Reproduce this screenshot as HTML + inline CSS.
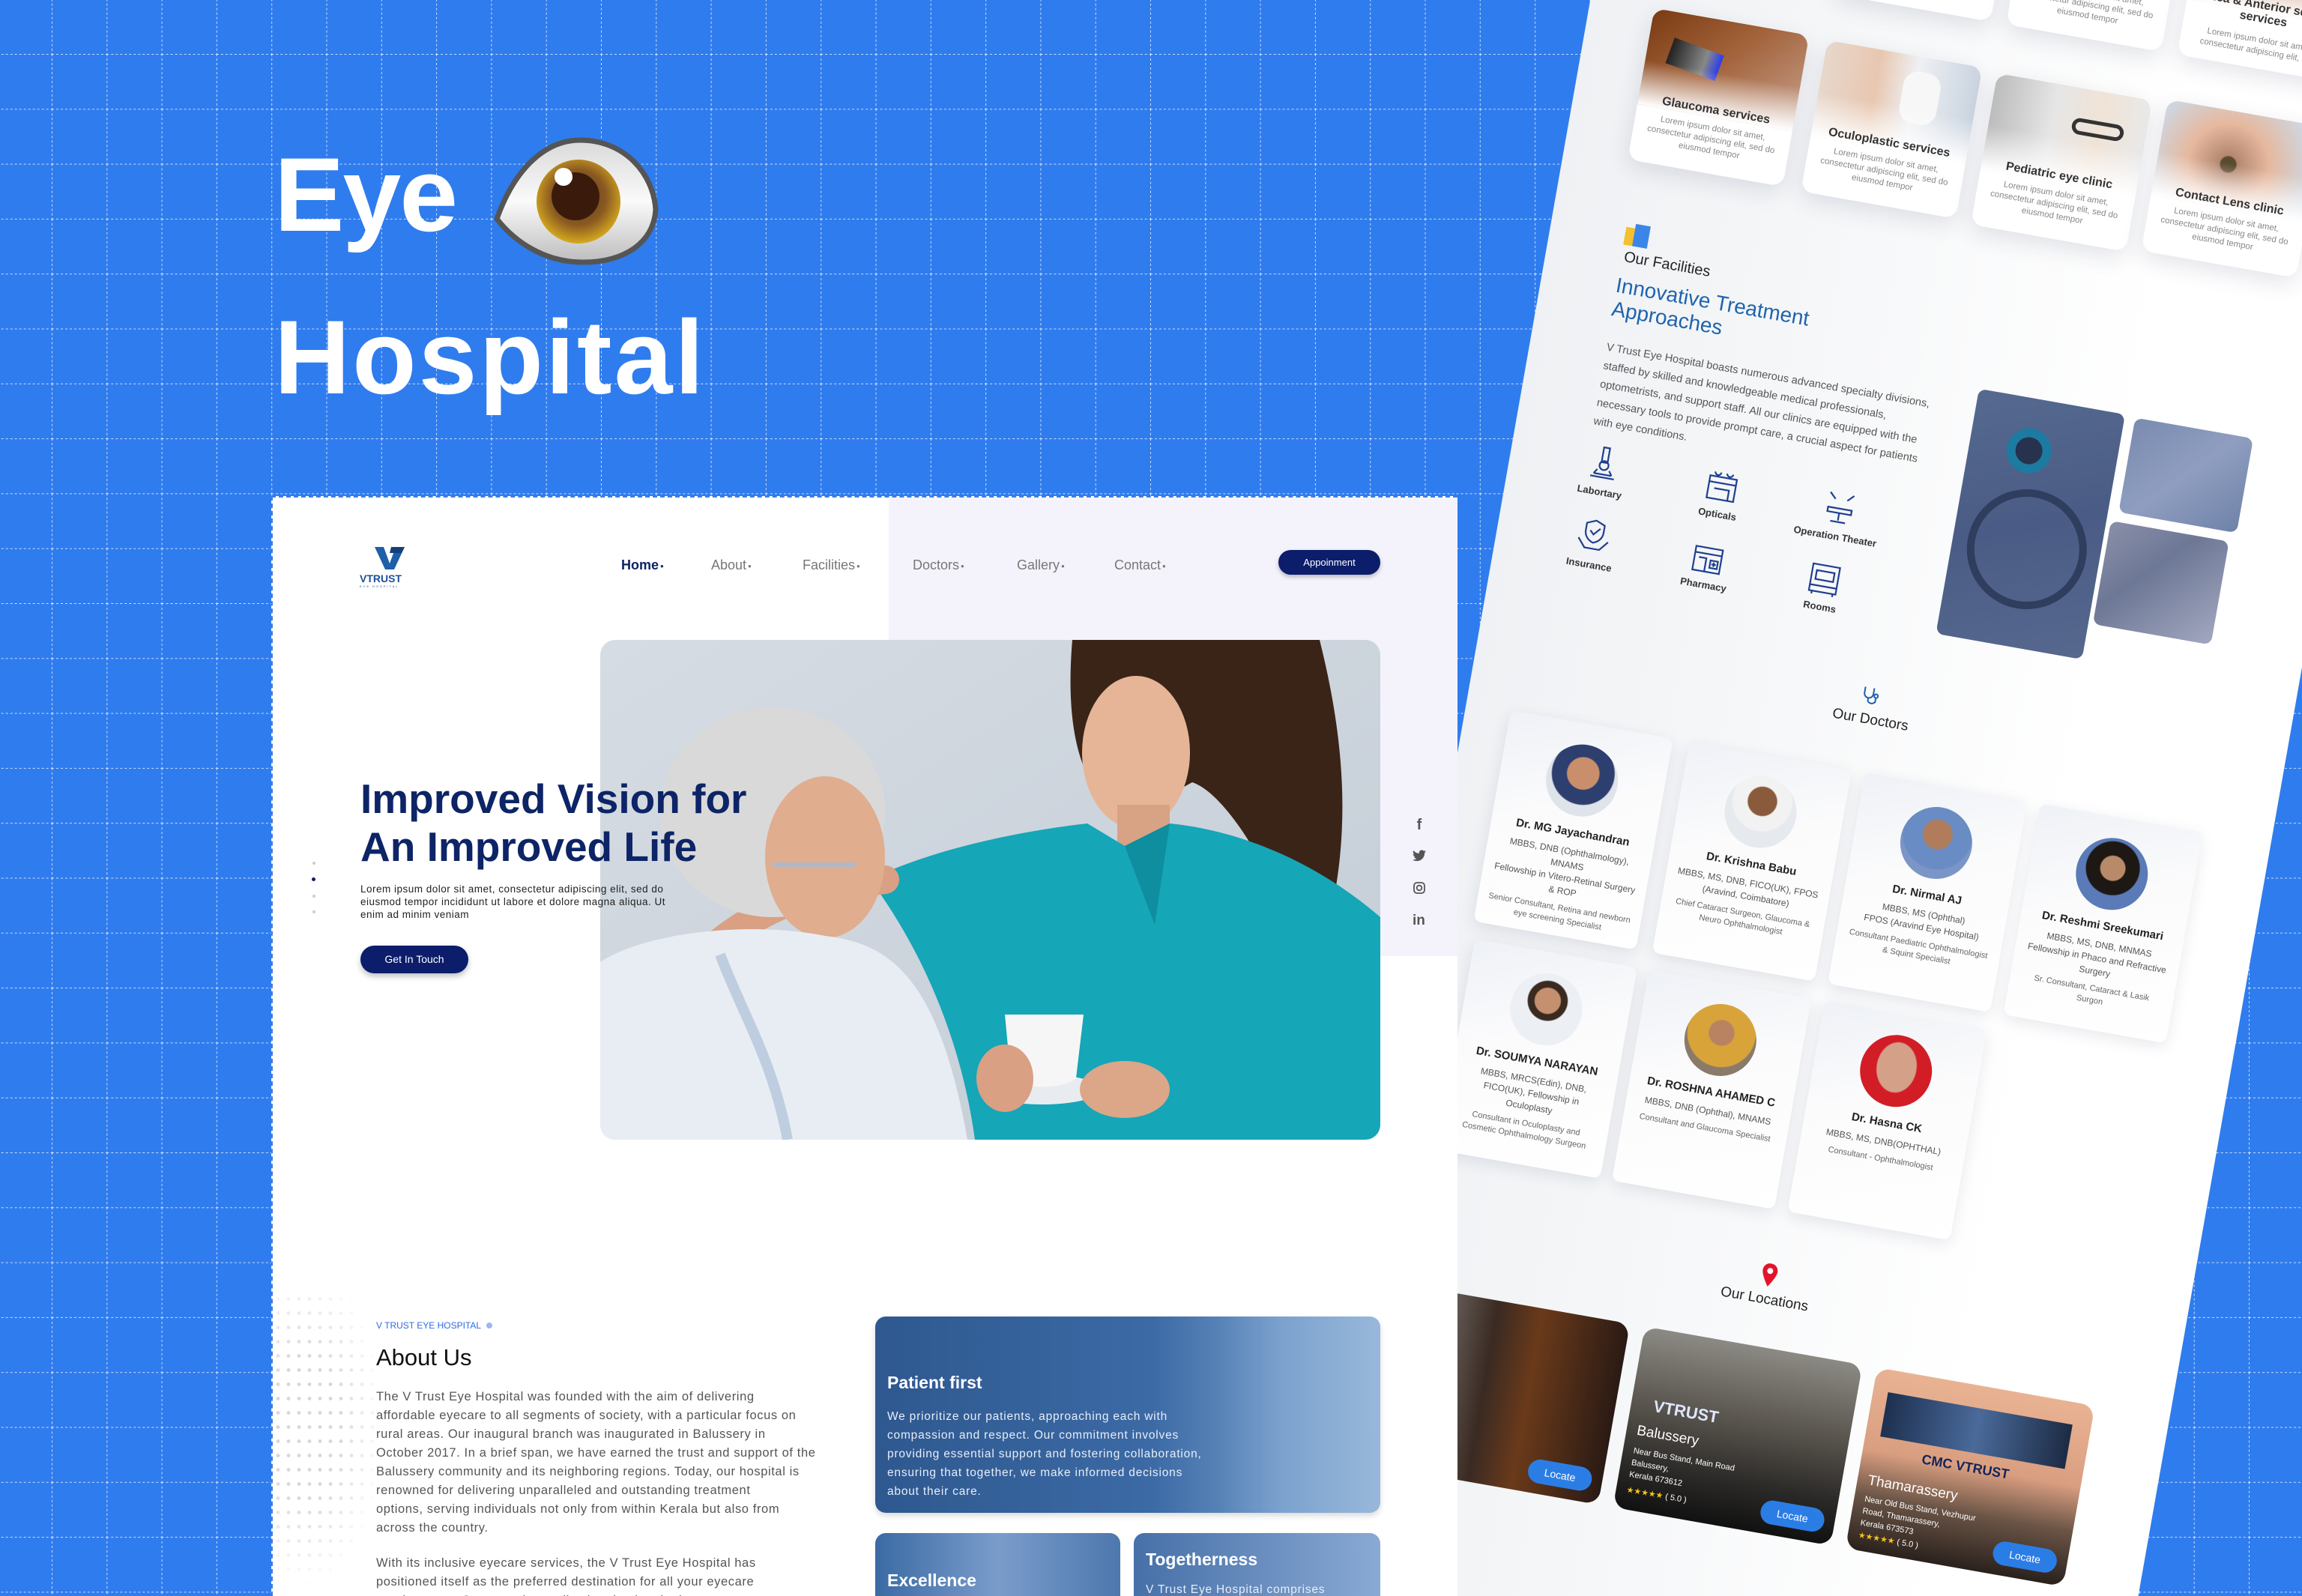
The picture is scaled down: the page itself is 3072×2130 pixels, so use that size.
<!DOCTYPE html>
<html><head><meta charset="utf-8"><style>
*{margin:0;padding:0;box-sizing:border-box}
html,body{width:3072px;height:2130px;overflow:hidden}
body{background:#2f7cee;font-family:"Liberation Sans",sans-serif}
#wrap{position:relative;width:3072px;height:2130px;overflow:hidden;background:#2f7cee}
.abs{position:absolute}
#grid{position:absolute;left:0;top:0}
.title{position:absolute;left:366px;color:#fff;font-weight:bold;font-size:140px;line-height:1;letter-spacing:-2px}
.rp{position:absolute;left:2228px;top:-600px;width:1090px;height:3400px;transform-origin:0 0;transform:rotate(10deg);background:linear-gradient(90deg,#eff1f4 0%,#f8f9fa 45%,#fff 75%);overflow:hidden}
.rp .a{position:absolute}
.sc{position:absolute;width:210px;height:205px;background:#fff;border-radius:16px;box-shadow:0 10px 30px rgba(30,40,80,.12);overflow:hidden;text-align:center}
.sc .im{position:absolute;left:0;top:0;width:100%;height:130px}
.sc .im:after{content:"";position:absolute;left:0;right:0;bottom:0;height:60px;background:linear-gradient(rgba(255,255,255,0),#fff)}
.sc h4{position:absolute;left:0;right:0;top:112px;font-size:16px;color:#333;font-weight:600}
.sc p{position:absolute;left:12px;right:12px;top:138px;font-size:11.5px;color:#888;line-height:15px}
.fi{position:absolute;width:120px;text-align:center;font-size:13px;font-weight:bold;color:#333}
.fi svg{display:block;margin:0 auto 6px}
.dc{position:absolute;width:220px;height:286px;background:linear-gradient(160deg,#eef1f6,#fbfbfc 40%,#fff);border-radius:10px;box-shadow:0 6px 20px rgba(30,40,80,.1);text-align:center;overflow:hidden}
.dc .ph{width:96px;height:96px;border-radius:50%;margin:28px auto 14px;overflow:hidden;position:relative}
.dc h5{font-size:15px;color:#222;margin-bottom:8px}
.dc p{font-size:12px;color:#555;line-height:18px;padding:0 14px}
.dc small{display:block;font-size:11px;color:#666;line-height:16px;padding:0 14px;margin-top:6px}
.lc{position:absolute;width:295px;height:245px;border-radius:18px;overflow:hidden;color:#fff}
.lc .lb{position:absolute;right:14px;bottom:14px;background:#2b7de6;border-radius:16px;width:86px;height:32px;text-align:center;line-height:32px;font-size:14px}
.pg{position:absolute;left:362px;top:662px;width:1583px;height:1468px;background:#fff;border-left:2px dashed #3a7ee6;border-top:2px dashed #3a7ee6;overflow:hidden}
.pg .a{position:absolute}
.nav{font-size:18px;color:#777;top:80px}
.nav b{font-size:8px;vertical-align:middle;margin-left:2px}
.ab p{font-size:16.5px;color:#555;line-height:25px;white-space:nowrap;letter-spacing:0.6px}
.card{border-radius:14px;overflow:hidden;color:#fff}
</style></head><body><div id="wrap">
<svg id="grid" width="3072" height="2130">
<defs><pattern id="g" x="69" y="72" width="73.3" height="73.3" patternUnits="userSpaceOnUse">
<line x1="0" y1="0" x2="0" y2="73.3" stroke="rgba(255,255,255,.75)" stroke-width="2" stroke-dasharray="3 3"/>
<line x1="0" y1="0" x2="73.3" y2="0" stroke="rgba(255,255,255,.75)" stroke-width="2" stroke-dasharray="3 3"/>
</pattern>
<radialGradient id="iris" cx="50%" cy="45%" r="55%"><stop offset="0" stop-color="#5a3514"/><stop offset=".6" stop-color="#8a5a22"/><stop offset="1" stop-color="#d7a91e"/></radialGradient>
<linearGradient id="wh" x1="0" y1="0" x2="0" y2="1"><stop offset="0" stop-color="#d9d9d9"/><stop offset=".5" stop-color="#fafafa"/><stop offset="1" stop-color="#bdbdbd"/></linearGradient>
</defs>
<rect width="3072" height="2130" fill="url(#g)"/>
<path d="M663,292 C688,222 730,187 774,187 C834,187 872,232 875,280 C872,325 832,350 778,350 C728,350 688,324 663,292 Z" fill="url(#wh)" stroke="#555" stroke-width="7"/>
<circle cx="772" cy="269" r="56" fill="url(#iris)"/>
<circle cx="768" cy="262" r="32" fill="#3a1b0b"/>
<circle cx="752" cy="236" r="12" fill="#fff"/>
</svg>
<div class="title" style="top:190px">Eye</div>
<div class="title" style="top:407px;letter-spacing:3px">Hospital</div>

<div class="rp">
 <div class="sc" style="left:321px;top:340px"><h4>Cataract services</h4><p>Lorem ipsum dolor sit amet, consectetur adipiscing elit, sed do eiusmod tempor</p></div>
 <div class="sc" style="left:552px;top:340px"><h4>Retina services</h4><p>Lorem ipsum dolor sit amet, consectetur adipiscing elit, sed do eiusmod tempor</p></div>
 <div class="sc" style="left:784px;top:340px"><div class="im" style="background:linear-gradient(#a8755a,#d8b39a)"></div><h4>Cornea &amp; Anterior segment services</h4><p style="top:160px">Lorem ipsum dolor sit amet, consectetur adipiscing elit, sed</p></div>
 <div class="sc" style="left:86px;top:605px"><div class="im" style="background:linear-gradient(135deg,#7a3a12,#a2623a 45%,#c7a08c)"><div class="a" style="left:30px;top:40px;width:70px;height:36px;background:linear-gradient(90deg,#222,#888 70%,#2a3cf0);transform:rotate(10deg)"></div></div><h4>Glaucoma services</h4><p>Lorem ipsum dolor sit amet, consectetur adipiscing elit, sed do eiusmod tempor</p></div>
 <div class="sc" style="left:321px;top:607px"><div class="im" style="background:linear-gradient(90deg,#e7d7cc,#e8c7b0 35%,#eef0f3 60%,#c9d3df)"><div class="a" style="left:110px;top:20px;width:50px;height:70px;border-radius:20px;background:#f7f7f7"></div></div><h4>Oculoplastic services</h4><p>Lorem ipsum dolor sit amet, consectetur adipiscing elit, sed do eiusmod tempor</p></div>
 <div class="sc" style="left:552px;top:611px"><div class="im" style="background:linear-gradient(90deg,#bcbcbc,#e6e6e6 40%,#f0e3d6 70%,#e9e9e9)"><div class="a" style="left:110px;top:40px;width:70px;height:22px;border:5px solid #333;border-radius:12px"></div></div><h4>Pediatric eye clinic</h4><p>Lorem ipsum dolor sit amet, consectetur adipiscing elit, sed do eiusmod tempor</p></div>
 <div class="sc" style="left:782px;top:606px"><div class="im" style="background:radial-gradient(circle at 45% 55%,#5a4a30 0 10px,#b48870 12px,#e6b89e 40%,#cfd6df 80%)"></div><h4>Contact Lens clinic</h4><p>Lorem ipsum dolor sit amet, consectetur adipiscing elit, sed do eiusmod tempor</p></div>

 <div class="a" style="left:100px;top:893px;width:34px;height:32px"><div class="a" style="left:0;top:6px;width:14px;height:24px;background:#f2c12e"></div><div class="a" style="left:12px;top:0;width:20px;height:30px;background:#3a86e8"></div></div>
 <div class="a" style="left:104px;top:928px;font-size:20px;color:#222">Our Facilities</div>
 <div class="a" style="left:100px;top:962px;font-size:28px;color:#1f64ad;line-height:32px;width:420px">Innovative Treatment<br>Approaches</div>
 <div class="a" style="left:102px;top:1050px;width:455px;font-size:14.5px;color:#555;line-height:25px">V Trust Eye Hospital boasts numerous advanced specialty divisions, staffed by skilled and knowledgeable medical professionals, optometrists, and support staff. All our clinics are equipped with the necessary tools to provide prompt care, a crucial aspect for patients with eye conditions.</div>
 <div class="fi" style="left:66px;top:1190px"><svg width="44" height="50" viewBox="0 0 44 50" fill="none" stroke="#1f3f8f" stroke-width="2.2"><rect x="18" y="4" width="8" height="20"/><circle cx="22" cy="28" r="6"/><path d="M6 44h32M10 40h24M14 34l-4 6M30 34l4 6"/></svg>Labortary</div>
 <div class="fi" style="left:226px;top:1192px"><svg width="48" height="50" viewBox="0 0 48 50" fill="none" stroke="#1f3f8f" stroke-width="2.2"><rect x="6" y="14" width="36" height="30"/><path d="M6 22h36M14 30h20v14M12 8a4 4 0 1 0 8 0M28 8a4 4 0 1 0 8 0"/></svg>Opticals</div>
 <div class="fi" style="left:386px;top:1194px"><svg width="48" height="50" viewBox="0 0 48 50" fill="none" stroke="#1f3f8f" stroke-width="2.2"><path d="M8 26h32v6H8zM24 32v10M14 44h20M8 6l8 8M40 6l-8 8"/></svg>Operation Theater</div>
 <div class="fi" style="left:69px;top:1288px"><svg width="48" height="50" viewBox="0 0 48 50" fill="none" stroke="#1f3f8f" stroke-width="2.2"><path d="M24 4l12 5v10c0 8-6 13-12 15-6-2-12-7-12-15V9z"/><path d="M18 18l5 5 8-9M4 30l10 12h10M44 30l-10 12h-10"/></svg>Insurance</div>
 <div class="fi" style="left:224px;top:1288px"><svg width="48" height="50" viewBox="0 0 48 50" fill="none" stroke="#1f3f8f" stroke-width="2.2"><rect x="6" y="14" width="36" height="32"/><path d="M6 22h36M12 28h10v18M28 30h10v10H28zM33 32v6M30 35h6"/></svg>Pharmacy</div>
 <div class="fi" style="left:382px;top:1290px"><svg width="48" height="50" viewBox="0 0 48 50" fill="none" stroke="#1f3f8f" stroke-width="2.2"><rect x="6" y="8" width="36" height="36"/><path d="M12 16h24v12H12zM6 36h36M10 44v4M38 44v4"/></svg>Rooms</div>
 <div class="a" style="left:601px;top:1030px;width:198px;height:332px;border-radius:10px;background:linear-gradient(160deg,#56698f,#4a5c85 50%,#56688e);overflow:hidden"><div class="a" style="left:50px;top:40px;width:60px;height:60px;border-radius:50%;border:12px solid #1d7aa0;background:#26324e"></div><div class="a" style="left:20px;top:120px;width:160px;height:160px;border-radius:50%;border:10px solid #2f3d5e"></div></div>
 <div class="a" style="left:813px;top:1032px;width:160px;height:128px;border-radius:10px;background:linear-gradient(135deg,#7a8bb0,#8f9ec0 50%,#6f82a8)"></div>
 <div class="a" style="left:805px;top:1173px;width:160px;height:140px;border-radius:10px;background:linear-gradient(135deg,#8a8fa8,#6d7896 40%,#a2a7bf)"></div>

 <svg class="a" style="left:515px;top:1446px" width="26" height="28" viewBox="0 0 26 28" fill="none" stroke="#1f5fb0" stroke-width="2"><path d="M6 2v8a6 6 0 0 0 12 0V2M12 16v4a6 6 0 0 0 10 0v-6"/><circle cx="22" cy="12" r="2.5"/></svg>
 <div class="a" style="left:470px;top:1480px;width:130px;text-align:center;font-size:19px;color:#222">Our Doctors</div>
 <div class="dc" style="left:60px;top:1561px"><div class="ph" style="background:radial-gradient(circle at 50% 40%,#c98f6d 0 28%,#2d3f6e 30% 55%,#dfe3ea 57%)"></div><h5>Dr. MG Jayachandran</h5><p>MBBS, DNB (Ophthalmology), MNAMS<br>Fellowship in Vitero-Retinal Surgery &amp; ROP</p><small>Senior Consultant, Retina and newborn eye screening Specialist</small></div>
 <div class="dc" style="left:302px;top:1561px"><div class="ph" style="background:radial-gradient(circle at 50% 35%,#8a5a3c 0 24%,#f2f2f2 26% 50%,#e6e9ee 52%)"></div><h5>Dr. Krishna Babu</h5><p>MBBS, MS, DNB, FICO(UK), FPOS (Aravind, Coimbatore)</p><small>Chief Cataract Surgeon, Glaucoma &amp; Neuro Ophthalmologist</small></div>
 <div class="dc" style="left:540px;top:1561px"><div class="ph" style="background:radial-gradient(circle at 50% 38%,#b07c5c 0 25%,#6a8cc4 27% 60%,#7b96c6 62%)"></div><h5>Dr. Nirmal AJ</h5><p>MBBS, MS (Ophthal)<br>FPOS (Aravind Eye Hospital)</p><small>Consultant Paediatric Ophthalmologist &amp; Squint Specialist</small></div>
 <div class="dc" style="left:778px;top:1561px"><div class="ph" style="background:radial-gradient(circle at 50% 42%,#b98a6a 0 22%,#1d1814 24% 48%,#5a7bb8 50%)"></div><h5>Dr. Reshmi Sreekumari</h5><p>MBBS, MS, DNB, MNMAS<br>Fellowship in Phaco and Refractive Surgery</p><small>Sr. Consultant, Cataract &amp; Lasik Surgon</small></div>
 <div class="dc" style="left:66px;top:1870px"><div class="ph" style="background:radial-gradient(circle at 50% 38%,#c49070 0 22%,#3a2a20 24% 34%,#eceff3 36%)"></div><h5>Dr. SOUMYA NARAYAN</h5><p>MBBS, MRCS(Edin), DNB, FICO(UK), Fellowship in Oculoplasty</p><small>Consultant in Oculoplasty and Cosmetic Ophthalmology Surgeon</small></div>
 <div class="dc" style="left:302px;top:1870px"><div class="ph" style="background:radial-gradient(circle at 50% 40%,#b98361 0 22%,#d8a43a 24% 60%,#8a7a6a 62%)"></div><h5>Dr. ROSHNA AHAMED C</h5><p>MBBS, DNB (Ophthal), MNAMS</p><small>Consultant and Glaucoma Specialist</small></div>
 <div class="dc" style="left:540px;top:1870px"><div class="ph" style="background:radial-gradient(ellipse 30% 38% at 50% 45%,#d4a088 0 90%,#d21d26 95%);background-color:#fff"></div><h5>Dr. Hasna CK</h5><p>MBBS, MS, DNB(OPHTHAL)</p><small>Consultant - Ophthalmologist</small></div>

 <svg class="a" style="left:520px;top:2228px" width="22" height="32" viewBox="0 0 22 32"><path d="M11 0C5 0 1 4.5 1 10c0 7 10 21 10 21s10-14 10-21C21 4.5 17 0 11 0z" fill="#e3142b"/><circle cx="11" cy="10" r="4" fill="#fff"/></svg>
 <div class="a" style="left:455px;top:2266px;width:150px;text-align:center;font-size:19px;color:#222">Our Locations</div>
 <div class="lc" style="left:64px;top:2340px;background:linear-gradient(90deg,#8c8a8a,#3a2a22 40%,#6a3a1a 60%,#2a1a14);"><div class="lb">Locate</div></div>
 <div class="lc" style="left:379px;top:2340px;background:linear-gradient(180deg,#8c8a84,#5b5750 40%,#2c2a28 75%,#111)"><div class="a" style="left:30px;top:90px;font-size:22px;font-weight:bold;color:#dfe6ff">VTRUST</div><div class="a" style="left:14px;top:128px;font-size:19px">Balussery</div><div class="a" style="left:14px;top:158px;font-size:11px;line-height:16px">Near Bus Stand, Main Road<br>Balussery,<br>Kerala 673612</div><div class="a" style="left:14px;top:212px;font-size:11px;color:#f5c518">★★★★★ <span style="color:#fff">( 5.0 )</span></div><div class="lb">Locate</div></div>
 <div class="lc" style="left:694px;top:2340px;background:linear-gradient(180deg,#e9b393,#d99e80 45%,#6a5446 70%,#2a211c)"><div class="a" style="left:20px;top:30px;width:250px;height:60px;background:linear-gradient(90deg,#1d3050,#4a6a9a,#1d2b44)"></div><div class="a" style="left:80px;top:100px;font-size:18px;font-weight:bold;color:#14245a">CMC VTRUST</div><div class="a" style="left:14px;top:140px;font-size:19px">Thamarassery</div><div class="a" style="left:14px;top:168px;font-size:11px;line-height:16px">Near Old Bus Stand, Vezhupur<br>Road, Thamarassery,<br>Kerala 673573</div><div class="a" style="left:14px;top:218px;font-size:11px;color:#f5c518">★★★★★ <span style="color:#fff">( 5.0 )</span></div><div class="lb">Locate</div></div>
</div>

<div class="pg">
 <div class="a" style="left:822px;top:0;width:761px;height:612px;background:#f4f3fc"></div>
 <svg class="a" style="left:136px;top:66px" width="40" height="30" viewBox="0 0 40 30"><path d="M0 0h12l8 22 8-22h12L26 30h-12z" fill="#1d5fa8"/><path d="M22 0h18l-4 8h-16z" fill="#163e7c"/></svg>
 <div class="a" style="left:116px;top:100px;font-size:14px;font-weight:bold;color:#1d4f9a">VTRUST</div>
 <div class="a" style="left:116px;top:116px;font-size:4px;color:#1d4f9a;letter-spacing:2px">EYE HOSPITAL</div>
 <div class="a nav" style="left:465px;color:#0c2366;font-weight:bold">Home<b>●</b></div>
 <div class="a nav" style="left:585px">About<b>●</b></div>
 <div class="a nav" style="left:707px">Facilities<b>●</b></div>
 <div class="a nav" style="left:854px">Doctors<b>●</b></div>
 <div class="a nav" style="left:993px">Gallery<b>●</b></div>
 <div class="a nav" style="left:1123px">Contact<b>●</b></div>
 <div class="a" style="left:1342px;top:70px;width:136px;height:33px;background:#0b1d6b;border-radius:17px;color:#fff;font-size:13px;text-align:center;line-height:33px;box-shadow:0 3px 6px rgba(0,0,0,.25)">Appoinment</div>

 <svg class="a" style="left:437px;top:190px" width="1041" height="667" viewBox="0 0 1041 667">
  <defs><clipPath id="hc"><rect width="1041" height="667" rx="20"/></clipPath>
  <linearGradient id="bg" x1="0" y1="0" x2="1" y2="1"><stop offset="0" stop-color="#d6dce3"/><stop offset="1" stop-color="#c3ccd6"/></linearGradient></defs>
  <g clip-path="url(#hc)">
   <rect width="1041" height="667" fill="url(#bg)"/>
   <path d="M630,0 L960,0 C990,120 1000,230 980,340 L900,330 C860,250 820,200 790,190 L700,240 C640,200 620,120 630,0Z" fill="#3a2418"/>
   <ellipse cx="715" cy="150" rx="72" ry="102" fill="#e6b597"/>
   <rect x="690" y="220" width="70" height="60" fill="#d8a285"/>
   <path d="M360,320 C440,280 560,255 650,245 L700,275 L760,245 C860,255 960,300 1041,370 L1041,667 L500,667 C480,520 420,400 360,320Z" fill="#15a6b7"/>
   <path d="M700,275 L740,380 L760,245Z" fill="#0e8e9e"/>
   <path d="M380,320 C300,330 200,350 110,450 C95,470 90,500 100,520" stroke="#d9a084" stroke-width="38" fill="none" stroke-linecap="round"/>
   <ellipse cx="230" cy="230" rx="150" ry="140" fill="#d9d9d9"/>
   <ellipse cx="300" cy="290" rx="80" ry="108" fill="#e0ad8f"/>
   <path d="M230,300 L340,300" stroke="#b0b8c8" stroke-width="6"/>
   <path d="M0,667 L0,430 C60,390 200,375 300,395 C380,405 450,440 490,667Z" fill="#e8edf3"/>
   <path d="M160,420 C190,500 230,560 250,667" stroke="#bfcde0" stroke-width="14" fill="none"/>
   <ellipse cx="590" cy="600" rx="78" ry="20" fill="#e8ecf0"/>
   <path d="M540,500 L645,500 L635,585 C620,600 560,600 548,585Z" fill="#f6f6f6"/>
   <ellipse cx="540" cy="585" rx="38" ry="45" fill="#d9a084"/>
   <ellipse cx="700" cy="600" rx="60" ry="38" fill="#dca689"/>
  </g>
 </svg>

 <div class="a" style="left:117px;top:370px;font-size:55px;font-weight:bold;color:#0d2466;line-height:64px;white-space:nowrap">Improved Vision for<br>An Improved Life</div>
 <div class="a" style="left:117px;top:514px;font-size:13.5px;color:#222;line-height:17px;white-space:nowrap;letter-spacing:0.5px">Lorem ipsum dolor sit amet, consectetur adipiscing elit, sed do<br>eiusmod tempor incididunt ut labore et dolore magna aliqua. Ut<br>enim ad minim veniam</div>
 <div class="a" style="left:117px;top:598px;width:144px;height:37px;background:#0b1d6b;border-radius:19px;color:#fff;font-size:14px;text-align:center;line-height:37px;box-shadow:0 4px 8px rgba(0,0,0,.25)">Get In Touch</div>
 <div class="a" style="left:53px;top:486px;width:4px;height:4px;border-radius:2px;background:#ccc"></div>
 <div class="a" style="left:52px;top:507px;width:5px;height:5px;border-radius:3px;background:#0b1d6b"></div>
 <div class="a" style="left:53px;top:530px;width:4px;height:4px;border-radius:2px;background:#ccc"></div>
 <div class="a" style="left:53px;top:551px;width:4px;height:4px;border-radius:2px;background:#ccc"></div>
 <div class="a" style="left:1522px;top:426px;width:16px;font-size:20px;color:#555;text-align:center;font-weight:bold;line-height:22px">f</div>
 <svg class="a" style="left:1521px;top:470px" width="18" height="16" viewBox="0 0 24 20"><path d="M24 2.4a10 10 0 0 1-2.8.8A5 5 0 0 0 23.3.4a10 10 0 0 1-3.1 1.2A4.9 4.9 0 0 0 11.8 6 14 14 0 0 1 1.7.9a4.9 4.9 0 0 0 1.5 6.6A5 5 0 0 1 1 6.9a4.9 4.9 0 0 0 3.9 4.8 5 5 0 0 1-2.2.1 4.9 4.9 0 0 0 4.6 3.4A9.9 9.9 0 0 1 0 17.3 14 14 0 0 0 7.5 19.5c9 0 14-7.5 14-14v-.6A10 10 0 0 0 24 2.4z" fill="#555"/></svg>
 <svg class="a" style="left:1522px;top:513px" width="16" height="16" viewBox="0 0 16 16" fill="none" stroke="#555" stroke-width="1.8"><rect x="1" y="1" width="14" height="14" rx="4"/><circle cx="8" cy="8" r="3.3"/></svg>
 <div class="a" style="left:1521px;top:554px;font-size:19px;color:#555;font-weight:bold">in</div>

 <div class="a" style="left:0;top:1060px;width:150px;height:400px;background-image:radial-gradient(circle,#d8d8d8 2.2px,transparent 2.6px);background-size:14px 19px;-webkit-mask-image:radial-gradient(ellipse at 30% 45%,#000 30%,transparent 70%)"></div>
 <div class="a" style="left:138px;top:1098px;font-size:12px;color:#2d6cdf">V TRUST EYE HOSPITAL <span style="display:inline-block;width:8px;height:8px;border-radius:4px;background:#9db8ec;margin-left:4px"></span></div>
 <div class="a" style="left:138px;top:1130px;font-size:31px;color:#111">About Us</div>
 <div class="a ab" style="left:138px;top:1188px"><p>The V Trust Eye Hospital was founded with the aim of delivering<br>affordable eyecare to all segments of society, with a particular focus on<br>rural areas. Our inaugural branch was inaugurated in Balussery in<br>October 2017. In a brief span, we have earned the trust and support of the<br>Balussery community and its neighboring regions. Today, our hospital is<br>renowned for delivering unparalleled and outstanding treatment<br>options, serving individuals not only from within Kerala but also from<br>across the country.</p><p style="margin-top:22px">With its inclusive eyecare services, the V Trust Eye Hospital has<br>positioned itself as the preferred destination for all your eyecare<br>requirements. Our commitment lies in adopting the latest</p></div>

 <div class="a card" style="left:804px;top:1093px;width:674px;height:262px;background:linear-gradient(90deg,#2e588f 0%,#3c6aa5 55%,#6f98c8 80%,#7ea4cf);box-shadow:0 4px 8px rgba(0,0,0,.15)">
  <div class="a" style="left:460px;top:0;width:214px;height:262px;background:linear-gradient(90deg,rgba(255,255,255,0),rgba(200,220,240,.35))"></div>
  <div class="a" style="left:16px;top:75px;font-size:23px;font-weight:bold">Patient first</div>
  <div class="a" style="left:16px;top:121px;font-size:15.5px;line-height:25px;color:#e8eef8;white-space:nowrap;letter-spacing:0.8px">We prioritize our patients, approaching each with<br>compassion and respect. Our commitment involves<br>providing essential support and fostering collaboration,<br>ensuring that together, we make informed decisions<br>about their care.</div>
 </div>
 <div class="a card" style="left:804px;top:1382px;width:327px;height:120px;background:linear-gradient(90deg,#3b6aa4,#7a9ccb 50%,#4d78ae)"><div class="a" style="left:16px;top:50px;font-size:23px;font-weight:bold">Excellence</div></div>
 <div class="a card" style="left:1149px;top:1382px;width:329px;height:120px;background:linear-gradient(90deg,#4670a8,#6e92c2 60%,#8aaad4)"><div class="a" style="left:16px;top:22px;font-size:23px;font-weight:bold">Togetherness</div><div class="a" style="left:16px;top:67px;font-size:15.5px;color:#e8eef8;white-space:nowrap;letter-spacing:0.8px">V Trust Eye Hospital comprises</div></div>
</div>
</div></body></html>
